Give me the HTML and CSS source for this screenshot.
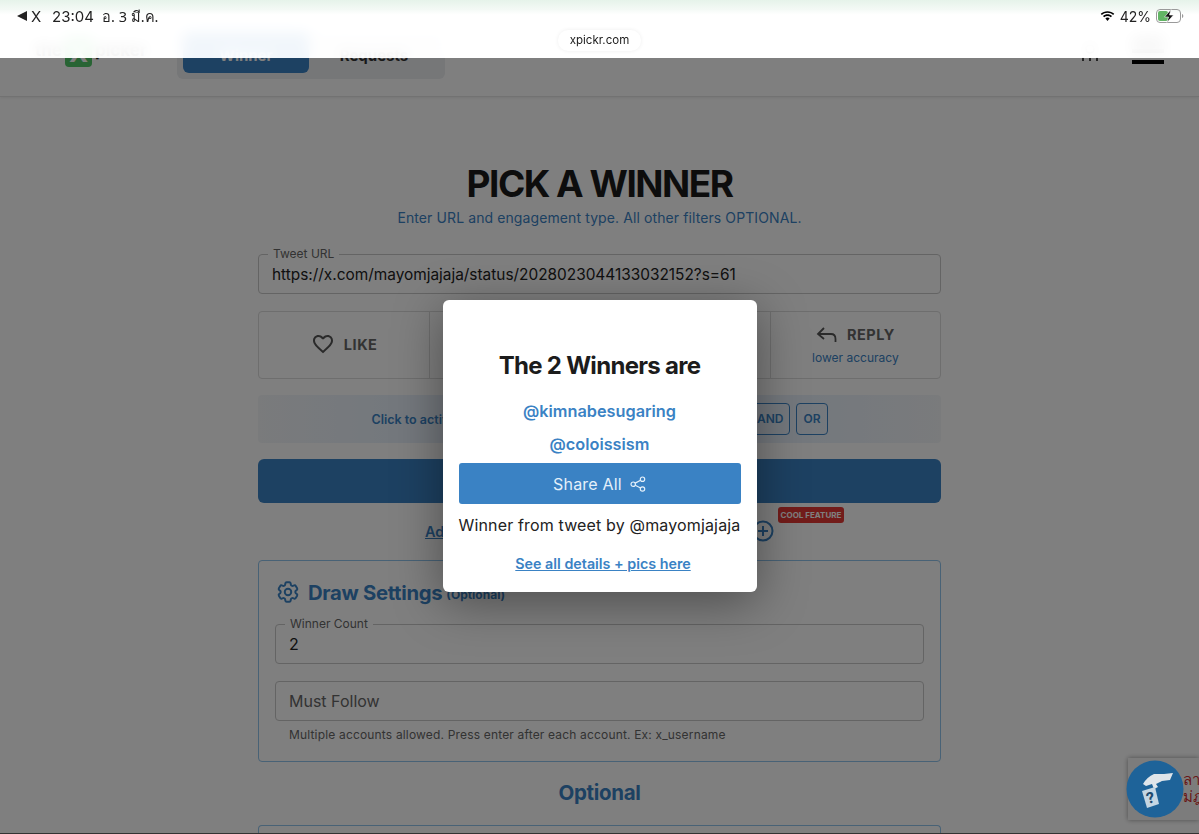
FILE: index.html
```html
<!DOCTYPE html>
<html lang="en">
<head>
  <meta charset="UTF-8">
  <title>xpickr.com</title>
  <link rel="stylesheet" href="styles.css">
</head>
<body>
  <div class="topbar">
    <div class="status">
      <div class="status-left">
        <span class="back"><span class="back-arrow"></span>X</span>
        <span class="clock">23:04</span>
        <span class="date">อ. 3 มี.ค.</span>
      </div>
      <div class="status-right">
        <svg class="wifi" width="15" height="12" viewBox="0 0 16 12">
          <path d="M8 2.600c2.300 0 4.400.9 6 2.400l1.200-1.300C13.300 1.900 10.800.8 8 .8S2.700 1.900.8 3.700L2 5c1.600-1.500 3.700-2.400 6-2.400z"/>
          <path d="M8 6c1.400 0 2.600.5 3.600 1.400l1.200-1.300C11.500 4.900 9.800 4.200 8 4.200s-3.500.7-4.800 1.900l1.200 1.300C5.400 6.500 6.600 6 8 6z"/>
          <path d="M8 7.600c-.9 0-1.700.3-2.300.9L8 11.200l2.300-2.700c-.6-.6-1.400-.9-2.300-.9z"/>
        </svg>
        <span class="percent">42%</span>
        <svg class="battery" width="28" height="14" viewBox="0 0 28 14">
          <rect x="0.500" y="0.500" width="24" height="13" rx="3.500" fill="none" stroke="#9a9a9a"/>
          <rect x="2" y="2" width="10" height="10" rx="2" fill="#62b565"/>
          <path d="M15 0.500 8.500 8h4l-1.500 5.500L17.500 6h-4z" fill="#111" stroke="#fff" stroke-width="0.600"/>
          <path d="M26 5v4c.8-.3 1.300-1.100 1.300-2s-.5-1.700-1.300-2z" fill="#9a9a9a"/>
        </svg>
      </div>
    </div>
    <div class="address"><span class="url-pill">xpickr.com</span></div>
  </div>

  <header class="site-header">
    <div class="logo">
      <span>the</span>
      <span class="logo-box">X</span>
      <span>picker</span>
    </div>
    <div class="tabs">
      <div class="tab tab-active">Winner</div>
      <div class="tab">Requests</div>
    </div>
    <div class="header-right">
      <svg width="18" height="18" viewBox="0 0 18 18" fill="none" stroke="#111" stroke-width="1.500">
        <circle cx="9" cy="6" r="4"/>
        <path d="M2 18v-4M9 18v-3M16 18v-4"/>
      </svg>
      <div class="burger">
        <span></span>
        <span></span>
        <span></span>
      </div>
    </div>
  </header>

  <main class="main">
    <h1 class="title">PICK A WINNER</h1>
    <p class="subtitle">Enter URL and engagement type. All other filters OPTIONAL.</p>

    <div class="field field-url">
      <label class="field-label">Tweet URL</label>
      <span class="field-value">https://x.com/mayomjajaja/status/2028023044133032152?s=61</span>
    </div>

    <div class="types">
      <div class="type">
        <div class="type-row">
          <svg width="24" height="24" viewBox="0 0 24 24" fill="#555">
            <path d="M16.500 3c-1.740 0-3.410.81-4.500 2.090C10.910 3.810 9.240 3 7.500 3 4.420 3 2 5.420 2 8.500c0 3.780 3.400 6.860 8.550 11.540L12 21.350l1.450-1.320C18.600 15.360 22 12.280 22 8.500 22 5.420 19.580 3 16.500 3zm-4.400 15.550l-.1.1-.1-.1C7.140 14.240 4 11.390 4 8.500 4 6.500 5.500 5 7.500 5c1.540 0 3.040.99 3.570 2.360h1.870C13.460 5.990 14.960 5 16.500 5c2 0 3.500 1.500 3.500 3.500 0 2.890-3.140 5.740-7.900 10.050z"/>
          </svg>
          <span class="type-name">LIKE</span>
        </div>
      </div>
      <div class="type"></div>
      <div class="type"></div>
      <div class="type">
        <div class="type-row">
          <svg width="22" height="18" viewBox="0 0 22 18" fill="none" stroke="#555" stroke-width="1.800">
            <path d="M8 2 2 8l6 5"/>
            <path d="M2 8h13c3 0 4.500 2 4.500 5v3"/>
          </svg>
          <span class="type-name">REPLY</span>
        </div>
        <div class="type-note">lower accuracy</div>
      </div>
    </div>

    <div class="activate">
      <div class="activate-inner">
        <span class="activate-text">Click to activate</span>
        <div class="logic">
          <span class="logic-btn">AND</span>
          <span class="logic-btn">OR</span>
        </div>
      </div>
    </div>

    <div class="submit"></div>

    <div class="add-row">
      <a class="add-link">Add</a>
      <svg width="22" height="22" viewBox="0 0 22 22" fill="none" stroke="#3a82c4" stroke-width="2">
        <circle cx="11" cy="11" r="9.500"/>
        <path d="M11 6v10M6 11h10"/>
      </svg>
      <span class="cool">COOL FEATURE</span>
    </div>

    <section class="settings">
      <div class="settings-title">
        <svg width="26" height="26" viewBox="0 0 24 24" fill="none" stroke="#3a82c4" stroke-width="1.800">
          <path d="M9.594 3.940c.09-.542.56-.94 1.110-.94h2.593c.55 0 1.020.398 1.110.94l.213 1.281c.063.374.313.686.645.87.074.04.147.083.22.127.324.196.72.257 1.075.124l1.217-.456a1.125 1.125 0 011.370.49l1.296 2.247a1.125 1.125 0 01-.26 1.431l-1.003.827c-.293.24-.438.613-.431.992a6.759 6.759 0 010 .255c-.007.378.138.75.43.99l1.005.828c.424.35.534.954.26 1.430l-1.298 2.247a1.125 1.125 0 01-1.369.491l-1.217-.456c-.355-.133-.75-.072-1.076.124a6.570 6.570 0 01-.22.128c-.331.183-.581.495-.644.869l-.213 1.280c-.09.543-.56.941-1.110.941h-2.594c-.55 0-1.020-.398-1.110-.94l-.213-1.281c-.062-.374-.312-.686-.644-.87a6.520 6.520 0 01-.22-.127c-.325-.196-.72-.257-1.076-.124l-1.217.456a1.125 1.125 0 01-1.369-.49l-1.297-2.247a1.125 1.125 0 01.26-1.431l1.004-.827c.292-.24.437-.613.43-.992a6.932 6.932 0 010-.255c.007-.378-.138-.75-.43-.99l-1.004-.828a1.125 1.125 0 01-.26-1.430l1.297-2.247a1.125 1.125 0 011.370-.491l1.216.456c.356.133.751.072 1.076-.124.072-.044.146-.087.22-.128.332-.183.582-.495.644-.869l.214-1.281z"/>
          <circle cx="12" cy="12" r="3"/>
        </svg>
        <h2 class="settings-name">Draw Settings</h2>
        <span class="settings-opt">(Optional)</span>
      </div>
      <div class="field field-count">
        <label class="field-label">Winner Count</label>
        <span class="field-value field-number">2</span>
      </div>
      <div class="field field-follow">
        <span class="field-value field-empty">Must Follow</span>
      </div>
      <p class="hint">Multiple accounts allowed. Press enter after each account. Ex: x_username</p>
    </section>

    <h2 class="optional">Optional</h2>
    <section class="next-card"></section>
  </main>

  <div class="captcha">
    <span>ลา</span>
    <span>ม่ฎ</span>
  </div>

  <div class="overlay">
    <div class="modal">
      <h3 class="modal-title">The 2 Winners are</h3>
      <a class="winner">@kimnabesugaring</a>
      <a class="winner">@coloissism</a>
      <div class="share">
        <span>Share All</span>
        <svg width="16" height="16" viewBox="0 0 16 16" fill="none" stroke="#e4f0fa" stroke-width="1.200">
          <circle cx="12.500" cy="3.200" r="2.200"/>
          <circle cx="3.200" cy="8.200" r="2.200"/>
          <circle cx="12.500" cy="13" r="2.200"/>
          <path d="M5.200 7.100l5.400-2.900M5.200 9.300l5.400 2.700"/>
        </svg>
      </div>
      <p class="from">Winner from tweet by @mayomjajaja</p>
      <a class="details">See all details + pics here</a>
    </div>
  </div>

  <div class="help-btn">
    <svg width="58" height="58" viewBox="0 0 58 58">
      <circle cx="29" cy="29" r="28.500" fill="#1e6399"/>
      <path d="M47 13 44 20 36 21 30 24 32 27 28 29 26 24 20 26 17 24Q21 17 28 14L38 14Z" fill="#dfe5ea"/>
      <polygon points="16,31 29,27 33,44 21,48" fill="#c4d6e3"/>
      <text class="card-mark" x="24.500" y="43" transform="rotate(-15 24.500 38)">?</text>
    </svg>
  </div>

  <div class="bottom-line"></div>
</body>
</html>
```

FILE: styles.css
```css
*{
  margin: 0;
  padding: 0;
  box-sizing: border-box;
}
body{
  position: relative;
  height: 834px;
  overflow: hidden;
  background: #fff;
  color: #1a1a1a;
  font-family: Inter, "Noto Sans", sans-serif;
}
svg{
  display: block;
  flex-shrink: 0;
}

/* tablet status bar and address bar */
.topbar{
  position: absolute;
  top: 0;
  left: 0;
  right: 0;
  height: 58px;
  z-index: 20;
  background: linear-gradient(#e6f3ea 0, #f3f9f5 9px, rgba(255,255,255,0.93) 15px);
  backdrop-filter: blur(7px);
}
.status{
  display: flex;
  justify-content: space-between;
  align-items: center;
  height: 32px;
  padding: 0 15px 0 17px;
  font-size: 15px;
  color: #222;
}
.status-left{
  display: flex;
  align-items: center;
}
.back{
  display: flex;
  align-items: center;
  gap: 4px;
  width: 35px;
}
.back-arrow{
  width: 0;
  height: 0;
  border-top: 5px solid transparent;
  border-bottom: 5px solid transparent;
  border-right: 10px solid #222;
}
.clock{
  width: 50px;
}
.date{
  font-family: "Noto Sans", "DejaVu Sans", sans-serif;
  font-size: 14.500px;
}
.status-right{
  display: flex;
  align-items: center;
  gap: 5px;
}
.percent{
  font-size: 14px;
}
.address{
  display: flex;
  justify-content: center;
  margin-top: -2px;
}
.url-pill{
  padding: 3px 12px;
  height: 21px;
  border-radius: 10px;
  background: #fff;
  box-shadow: 0 0 4px rgba(0,0,0,0.07);
  font-size: 11.500px;
  line-height: 15px;
  color: #222;
}

/* site header */
.site-header{
  display: flex;
  align-items: flex-start;
  height: 97px;
  padding: 32px 35px 0;
  border-bottom: 1px solid #e4e4e4;
  box-shadow: 0 1px 3px rgba(0,0,0,0.08);
}
.logo{
  display: flex;
  align-items: center;
  gap: 3px;
  width: 142px;
  height: 35px;
  font-size: 17px;
  font-weight: 700;
  color: #222;
}
.logo-box{
  display: flex;
  align-items: center;
  justify-content: center;
  width: 27px;
  height: 30px;
  margin-top: 5px;
  border-radius: 4px;
  background: #50c868;
  font-size: 26px;
  color: #fff;
}
.tabs{
  display: flex;
  width: 268px;
  height: 47px;
  padding: 0 6px;
  border-radius: 0 0 6px 6px;
  background: #eceef0;
}
.tab{
  width: 126px;
  height: 41px;
  border-radius: 6px;
  font-size: 15px;
  font-weight: 700;
  line-height: 47px;
  text-align: center;
  color: #333;
}
.tab + .tab{
  width: 130px;
}
.tab-active{
  background: #3a82c4;
  color: #fff;
}
.header-right{
  display: flex;
  align-items: flex-start;
  gap: 33px;
  margin-left: auto;
}
.header-right svg{
  margin-top: 11px;
}
.burger{
  display: flex;
  flex-direction: column;
  gap: 7px;
  width: 32px;
  margin-top: 6px;
}
.burger span{
  height: 4px;
  background: #000;
}

/* main form */
.main{
  width: 683px;
  margin: 0 auto;
}
.title{
  margin-top: 64px;
  font-size: 37px;
  line-height: 46px;
  font-weight: 700;
  letter-spacing: -1.500px;
  text-align: center;
}
.subtitle{
  font-size: 14px;
  line-height: 22px;
  letter-spacing: 0.100px;
  text-align: center;
  color: #3a82c4;
}
.field{
  position: relative;
  display: flex;
  align-items: center;
  height: 40px;
  padding: 0 13px;
  border: 1px solid #c8c8c8;
  border-radius: 4px;
}
.field-url{
  margin-top: 25px;
}
.field-label{
  position: absolute;
  top: -9px;
  left: 9px;
  padding: 0 5px;
  background: #fff;
  font-size: 12px;
  line-height: 15px;
  color: #666;
}
.field-value{
  font-size: 15.400px;
  color: #222;
}
.field-number{
  font-size: 16px;
}
.field-empty{
  font-size: 16px;
  color: #666;
}
.types{
  display: grid;
  grid-template-columns: repeat(4, 1fr);
  height: 68px;
  margin-top: 17px;
  border: 1px solid #dcdcdc;
  border-radius: 4px;
}
.type{
  display: flex;
  flex-direction: column;
  justify-content: center;
  align-items: center;
  gap: 6px;
  border-left: 1px solid #dcdcdc;
}
.type:first-child{
  border-left: 0;
  padding-bottom: 2px;
}
.type-row{
  display: flex;
  align-items: center;
  gap: 9px;
}
.type-name{
  font-size: 14.500px;
  font-weight: 700;
  letter-spacing: 0.500px;
  color: #666;
}
.type-note{
  font-size: 12px;
  color: #3a82c4;
}
.activate{
  display: flex;
  justify-content: center;
  align-items: center;
  height: 48px;
  margin-top: 16px;
  border-radius: 4px;
  background: linear-gradient(90deg, #f4f6f9, #e8f1fb 20%, #e8f1fb 80%, #f4f6f9);
}
.activate-inner{
  display: flex;
  justify-content: space-between;
  align-items: center;
  width: 456px;
}
.activate-text{
  font-size: 12.500px;
  font-weight: 600;
  color: #3a82c4;
}
.logic{
  display: flex;
  gap: 6px;
}
.logic-btn{
  height: 32px;
  padding: 0 6px;
  border: 1px solid #3a82c4;
  border-radius: 4px;
  font-size: 12px;
  font-weight: 600;
  line-height: 30px;
  color: #3a82c4;
}
.submit{
  height: 44px;
  margin-top: 16px;
  border-radius: 6px;
  background: #3a82c4;
}
.add-row{
  position: relative;
  display: flex;
  justify-content: space-between;
  align-items: center;
  width: 349px;
  height: 24px;
  margin: 16px auto 0;
}
.add-link{
  font-size: 14.500px;
  font-weight: 600;
  text-decoration: underline;
  color: #3a82c4;
}
.cool{
  position: absolute;
  top: -12px;
  left: 353px;
  width: 66px;
  height: 16px;
  border-radius: 3px;
  background: #e53935;
  font-size: 8px;
  font-weight: 700;
  line-height: 16px;
  text-align: center;
  white-space: nowrap;
  color: #fff;
}
.settings{
  height: 202px;
  margin-top: 17px;
  padding: 17px 16px 0;
  border: 1px solid #90c4ec;
  border-radius: 4px;
}
.settings-title{
  display: flex;
  align-items: center;
  height: 28px;
}
.settings-name{
  margin-left: 7px;
  font-size: 20.300px;
  font-weight: 700;
  letter-spacing: -0.300px;
  color: #3a82c4;
}
.settings-opt{
  margin: 5px 0 0 4px;
  font-size: 12px;
  font-weight: 700;
  color: #3a82c4;
}
.field-count{
  margin-top: 18px;
}
.field-follow{
  margin-top: 17px;
}
.hint{
  margin: 6px 0 0 14px;
  font-size: 12px;
  line-height: 16px;
  letter-spacing: 0.170px;
  color: #666;
}
.optional{
  margin-top: 17px;
  font-size: 20.500px;
  line-height: 28px;
  font-weight: 700;
  letter-spacing: -0.300px;
  text-align: center;
  color: #3a82c4;
}
.next-card{
  height: 9px;
  margin-top: 18px;
  border: 1px solid #90c4ec;
  border-bottom: 0;
  border-radius: 4px 4px 0 0;
}

/* recaptcha style badge and help button */
.captcha{
  position: absolute;
  top: 758px;
  left: 1128px;
  display: flex;
  flex-direction: column;
  width: 71px;
  height: 62px;
  padding: 13px 0 0 55px;
  background: #f9f9f9;
  box-shadow: 0 0 5px rgba(0,0,0,0.4);
  font-family: "Noto Sans", "DejaVu Sans", sans-serif;
  font-size: 15px;
  line-height: 17px;
  white-space: nowrap;
  color: #d32f2f;
}
.help-btn{
  position: absolute;
  top: 760px;
  left: 1126px;
  z-index: 15;
}
.card-mark{
  font-size: 15px;
  font-weight: 700;
  text-anchor: middle;
  fill: #1e4a6e;
}
.bottom-line{
  position: absolute;
  left: 0;
  right: 0;
  bottom: 0;
  height: 1px;
  z-index: 16;
  background: #333;
}

/* winners dialog */
.overlay{
  position: absolute;
  top: 58px;
  left: 0;
  right: 0;
  bottom: 0;
  z-index: 10;
  display: flex;
  justify-content: center;
  align-items: center;
  background: rgba(0,0,0,0.5);
}
.modal{
  display: flex;
  flex-direction: column;
  align-items: center;
  width: 314px;
  height: 292px;
  padding: 50px 16px 0;
  border-radius: 6px;
  background: #fff;
  box-shadow: 0 10px 50px rgba(0,0,0,0.4);
}
.modal-title{
  font-size: 24px;
  line-height: 32px;
  font-weight: 700;
  letter-spacing: -0.700px;
  color: #1c1c1c;
}
.winner{
  font-size: 16.300px;
  line-height: 33px;
  font-weight: 600;
  color: #3a82c4;
}
.winner:first-of-type{
  margin-top: 13px;
}
.share{
  display: flex;
  justify-content: center;
  align-items: center;
  gap: 8px;
  width: 100%;
  height: 41px;
  margin-top: 2px;
  border-radius: 3px;
  background: #3a82c4;
  font-size: 16px;
  letter-spacing: 0.200px;
  color: #e4f0fa;
}
.from{
  margin-top: 10px;
  font-size: 16px;
  line-height: 22px;
  letter-spacing: 0.150px;
  white-space: nowrap;
  color: #222;
}
.details{
  margin: 18px 0 0 7px;
  font-size: 14.300px;
  line-height: 20px;
  font-weight: 600;
  text-decoration: underline;
  color: #3a82c4;
}
```
